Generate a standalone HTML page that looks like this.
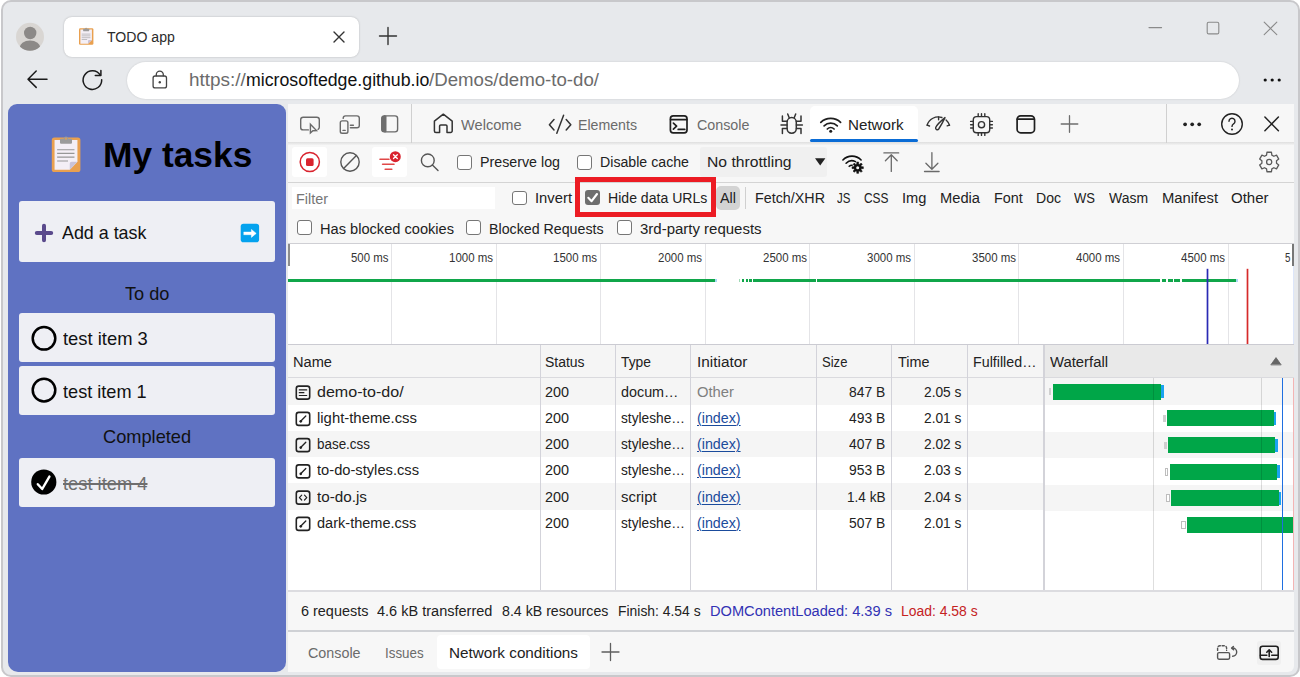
<!DOCTYPE html>
<html lang="en"><head><meta charset="utf-8"><title>TODO app - DevTools Network</title>
<style>
html,body{margin:0;padding:0;background:#fff;}
body{width:1300px;height:677px;position:relative;overflow:hidden;font-family:"Liberation Sans", Arial, sans-serif;}
.t{position:absolute;white-space:nowrap;line-height:1;transform-origin:0 50%;}
.b{position:absolute;box-sizing:border-box;}
svg{position:absolute;left:0;top:0;overflow:visible;}
</style></head><body>
<div class="b" style="left:1.00px;top:0.00px;width:1299.00px;height:677.00px;background:#e7e9ec;border:2px solid #c8c8cb;border-radius:10px;"></div>
<div class="b" style="left:64.00px;top:17.00px;width:295.00px;height:40.00px;background:#fff;border-radius:8px;box-shadow:0 0 2px rgba(0,0,0,.25);"></div>
<div class="b" style="left:127.00px;top:62.00px;width:1112.00px;height:37.00px;background:#fff;border-radius:18.5px;box-shadow:0 0 2px rgba(0,0,0,.15);"></div>
<div class="b" style="left:7.50px;top:104.00px;width:278.50px;height:568.00px;background:#5f72c2;border-radius:9px 9px 10px 10px;"></div>
<div class="b" style="left:19.00px;top:201.00px;width:256.00px;height:61.00px;background:#eeeff4;border-radius:3px;"></div>
<div class="b" style="left:19.00px;top:313.40px;width:256.00px;height:49.00px;background:#eeeff4;border-radius:3px;"></div>
<div class="b" style="left:19.00px;top:366.00px;width:256.00px;height:49.00px;background:#eeeff4;border-radius:3px;"></div>
<div class="b" style="left:19.00px;top:457.50px;width:256.00px;height:49.00px;background:#eeeff4;border-radius:3px;"></div>
<div class="b" style="left:288.00px;top:104.00px;width:1006.00px;height:568.00px;background:#f7f7f7;border-radius:0 0 6px 0;"></div>
<div class="b" style="left:288.00px;top:142.40px;width:1006.00px;height:2.60px;background:linear-gradient(#dedede,#f3f3f3);"></div>
<div class="b" style="left:411.00px;top:104.00px;width:1.00px;height:39.00px;background:#d0d0d0;"></div>
<div class="b" style="left:1166.00px;top:104.00px;width:1.00px;height:39.00px;background:#d0d0d0;"></div>
<div class="b" style="left:810.00px;top:106.20px;width:108.00px;height:34.80px;background:#fff;border-radius:5px 5px 0 0;"></div>
<div class="b" style="left:810.00px;top:139.00px;width:108.00px;height:3.00px;background:#0a6cd6;border-radius:1.5px;"></div>
<div class="b" style="left:292.40px;top:147.40px;width:34.60px;height:29.20px;background:#fff;border-radius:3px;"></div>
<div class="b" style="left:372.40px;top:147.40px;width:34.60px;height:29.20px;background:#fff;border-radius:3px;"></div>
<div class="b" style="left:700.00px;top:147.40px;width:126.60px;height:29.20px;background:#f0f0f0;border-radius:3px;"></div>
<div class="b" style="left:288.00px;top:181.80px;width:1006.00px;height:1.00px;background:#d4d4d4;"></div>
<div class="b" style="left:292.40px;top:186.60px;width:203.00px;height:22.40px;background:#fff;"></div>
<div class="b" style="left:716.20px;top:185.80px;width:23.80px;height:24.20px;background:#d3d3d3;border-radius:5px;"></div>
<div class="b" style="left:745.20px;top:187.00px;width:1.00px;height:22.00px;background:#d0d0d0;"></div>
<div class="b" style="left:457.40px;top:155.00px;width:14.60px;height:14.60px;background:#fff;border:1.3px solid #767676;border-radius:3px;"></div>
<div class="b" style="left:577.20px;top:155.00px;width:14.60px;height:14.60px;background:#fff;border:1.3px solid #767676;border-radius:3px;"></div>
<div class="b" style="left:512.20px;top:190.60px;width:14.60px;height:14.60px;background:#fff;border:1.3px solid #767676;border-radius:3px;"></div>
<div class="b" style="left:585.00px;top:190.40px;width:14.60px;height:14.60px;background:#6e6e6e;border-radius:3px;"></div>
<div class="b" style="left:297.20px;top:220.40px;width:14.60px;height:14.60px;background:#fff;border:1.3px solid #767676;border-radius:3px;"></div>
<div class="b" style="left:466.20px;top:220.40px;width:14.60px;height:14.60px;background:#fff;border:1.3px solid #767676;border-radius:3px;"></div>
<div class="b" style="left:617.40px;top:220.40px;width:14.60px;height:14.60px;background:#fff;border:1.3px solid #767676;border-radius:3px;"></div>
<div class="b" style="left:575.00px;top:177.00px;width:141.20px;height:39.80px;border:5px solid #ec1c24;"></div>
<div class="b" style="left:288.00px;top:243.00px;width:1006.00px;height:101.00px;background:#fff;border-top:1px solid #cfcfd4;"></div>
<div class="b" style="left:390.98px;top:244.00px;width:1.00px;height:100.00px;background:#e4e4e7;"></div>
<div class="b" style="left:495.56px;top:244.00px;width:1.00px;height:100.00px;background:#e4e4e7;"></div>
<div class="b" style="left:600.14px;top:244.00px;width:1.00px;height:100.00px;background:#e4e4e7;"></div>
<div class="b" style="left:704.72px;top:244.00px;width:1.00px;height:100.00px;background:#e4e4e7;"></div>
<div class="b" style="left:809.30px;top:244.00px;width:1.00px;height:100.00px;background:#e4e4e7;"></div>
<div class="b" style="left:913.88px;top:244.00px;width:1.00px;height:100.00px;background:#e4e4e7;"></div>
<div class="b" style="left:1018.46px;top:244.00px;width:1.00px;height:100.00px;background:#e4e4e7;"></div>
<div class="b" style="left:1123.04px;top:244.00px;width:1.00px;height:100.00px;background:#e4e4e7;"></div>
<div class="b" style="left:1227.62px;top:244.00px;width:1.00px;height:100.00px;background:#e4e4e7;"></div>
<div class="b" style="left:288.00px;top:244.00px;width:1.70px;height:22.00px;background:#8c8c8c;"></div>
<div class="b" style="left:1292.30px;top:244.00px;width:1.70px;height:22.00px;background:#777;"></div>
<div class="b" style="left:1293.00px;top:266.00px;width:1.00px;height:78.00px;background:#dde6fa;"></div>
<div class="b" style="left:288.00px;top:279.00px;width:427.00px;height:3.00px;background:#10a64a;"></div>
<div class="b" style="left:741.80px;top:279.00px;width:2.00px;height:3.00px;background:#10a64a;"></div>
<div class="b" style="left:745.60px;top:279.00px;width:2.20px;height:3.00px;background:#10a64a;"></div>
<div class="b" style="left:749.40px;top:279.00px;width:2.40px;height:3.00px;background:#10a64a;"></div>
<div class="b" style="left:753.40px;top:279.00px;width:62.20px;height:3.00px;background:#10a64a;"></div>
<div class="b" style="left:817.00px;top:279.00px;width:343.00px;height:3.00px;background:#10a64a;"></div>
<div class="b" style="left:1162.20px;top:279.00px;width:3.80px;height:3.00px;background:#10a64a;"></div>
<div class="b" style="left:1168.00px;top:279.00px;width:5.00px;height:3.00px;background:#10a64a;"></div>
<div class="b" style="left:1174.40px;top:279.00px;width:5.60px;height:3.00px;background:#10a64a;"></div>
<div class="b" style="left:1182.00px;top:279.00px;width:54.00px;height:3.00px;background:#10a64a;"></div>
<div class="b" style="left:715.00px;top:279.00px;width:2.00px;height:3.00px;background:#a9d8f5;"></div>
<div class="b" style="left:739.00px;top:279.00px;width:1.20px;height:3.00px;background:#9fd9b5;"></div>
<div class="b" style="left:1236.00px;top:279.00px;width:2.00px;height:3.00px;background:#a9d8f5;"></div>
<div class="b" style="left:288.00px;top:344.00px;width:1006.00px;height:35.00px;background:#f5f5f5;border-top:1px solid #cbcbd2;border-bottom:2px solid #dadade;"></div>
<div class="b" style="left:1044.00px;top:345.00px;width:250.00px;height:32.00px;background:#e9e9e9;"></div>
<div class="b" style="left:288.00px;top:378.35px;width:1006.00px;height:26.25px;background:#f5f5f5;"></div>
<div class="b" style="left:288.00px;top:404.60px;width:1006.00px;height:26.25px;background:#fff;"></div>
<div class="b" style="left:288.00px;top:430.85px;width:1006.00px;height:26.25px;background:#f5f5f5;"></div>
<div class="b" style="left:288.00px;top:457.10px;width:1006.00px;height:26.25px;background:#fff;"></div>
<div class="b" style="left:288.00px;top:483.35px;width:1006.00px;height:26.25px;background:#f5f5f5;"></div>
<div class="b" style="left:288.00px;top:509.60px;width:1006.00px;height:26.25px;background:#fff;"></div>
<div class="b" style="left:288.00px;top:535.85px;width:1006.00px;height:54.55px;background:#fff;"></div>
<div class="b" style="left:1045.00px;top:378.50px;width:249.00px;height:26.60px;background:#f5f5f5;"></div>
<div class="b" style="left:1045.00px;top:405.10px;width:249.00px;height:26.60px;background:#fff;"></div>
<div class="b" style="left:1045.00px;top:431.70px;width:249.00px;height:26.60px;background:#f5f5f5;"></div>
<div class="b" style="left:1045.00px;top:458.30px;width:249.00px;height:26.60px;background:#fff;"></div>
<div class="b" style="left:1045.00px;top:484.90px;width:249.00px;height:26.60px;background:#f5f5f5;"></div>
<div class="b" style="left:1045.00px;top:511.50px;width:249.00px;height:26.60px;background:#fff;"></div>
<div class="b" style="left:1045.00px;top:538.10px;width:249.00px;height:52.30px;background:#fff;"></div>
<div class="b" style="left:539.50px;top:345.00px;width:1.00px;height:245.40px;background:#d3d3da;"></div>
<div class="b" style="left:614.90px;top:345.00px;width:1.00px;height:245.40px;background:#d3d3da;"></div>
<div class="b" style="left:690.10px;top:345.00px;width:1.00px;height:245.40px;background:#d3d3da;"></div>
<div class="b" style="left:815.90px;top:345.00px;width:1.00px;height:245.40px;background:#d3d3da;"></div>
<div class="b" style="left:890.90px;top:345.00px;width:1.00px;height:245.40px;background:#d3d3da;"></div>
<div class="b" style="left:966.90px;top:345.00px;width:1.00px;height:245.40px;background:#d3d3da;"></div>
<div class="b" style="left:1043.20px;top:345.00px;width:1.80px;height:245.40px;background:#d3d3d9;"></div>
<div class="b" style="left:1160.00px;top:385.20px;width:3.60px;height:13.20px;background:#1aa3f0;"></div>
<div class="b" style="left:1053.00px;top:383.80px;width:108.00px;height:16.00px;background:#00a648;"></div>
<div class="b" style="left:1049.40px;top:388.30px;width:1.60px;height:7.00px;background:#cfcfcf;"></div>
<div class="b" style="left:1273.00px;top:411.85px;width:3.40px;height:13.20px;background:#1aa3f0;"></div>
<div class="b" style="left:1167.00px;top:410.45px;width:107.00px;height:16.00px;background:#00a648;"></div>
<div class="b" style="left:1163.00px;top:414.95px;width:3.00px;height:7.00px;background:#cfcfcf;"></div>
<div class="b" style="left:1274.00px;top:438.50px;width:3.60px;height:13.20px;background:#1aa3f0;"></div>
<div class="b" style="left:1168.40px;top:437.10px;width:106.60px;height:16.00px;background:#00a648;"></div>
<div class="b" style="left:1164.00px;top:441.60px;width:3.20px;height:7.00px;background:#cfcfcf;"></div>
<div class="b" style="left:1276.40px;top:465.15px;width:3.60px;height:13.20px;background:#1aa3f0;"></div>
<div class="b" style="left:1169.60px;top:463.75px;width:107.80px;height:16.00px;background:#00a648;"></div>
<div class="b" style="left:1164.60px;top:467.75px;width:3.40px;height:8.00px;background:#fff;border:1px solid #bdbdbd;"></div>
<div class="b" style="left:1278.00px;top:491.80px;width:3.40px;height:13.20px;background:#1aa3f0;"></div>
<div class="b" style="left:1171.00px;top:490.40px;width:108.00px;height:16.00px;background:#00a648;"></div>
<div class="b" style="left:1166.00px;top:494.40px;width:3.60px;height:8.00px;background:#fff;border:1px solid #bdbdbd;"></div>
<div class="b" style="left:1187.00px;top:517.05px;width:107.00px;height:16.00px;background:#00a648;"></div>
<div class="b" style="left:1181.00px;top:521.05px;width:5.00px;height:8.00px;background:#fff;border:1px solid #bdbdbd;"></div>
<div class="b" style="left:1152.50px;top:378.00px;width:1.00px;height:212.40px;background:rgba(0,0,0,.13);"></div>
<div class="b" style="left:1261.00px;top:378.00px;width:1.00px;height:212.40px;background:rgba(0,0,0,.13);"></div>
<div class="b" style="left:1281.80px;top:378.00px;width:1.40px;height:212.40px;background:#1f6fe0;"></div>
<div class="b" style="left:1292.60px;top:378.00px;width:1.00px;height:212.40px;background:#f3b4b4;"></div>
<div class="b" style="left:288.00px;top:589.50px;width:1006.00px;height:42.50px;background:#f7f7f7;border-top:2px solid #dcdce0;border-bottom:2px solid #cfd1d5;"></div>
<div class="b" style="left:437.00px;top:635.00px;width:153.40px;height:34.40px;background:#fff;border-radius:4px;"></div>
<div class="b" style="left:1257.00px;top:641.00px;width:24.00px;height:23.50px;background:#f0f0f0;border-radius:3px;"></div>
<div class="t" id="t0" style="left:107.30px;top:29.13px;font-size:15.2px;color:#2b2b2b;transform:scaleX(0.9280);">TODO app</div>
<div class="t" id="t1" style="left:189.00px;top:71.59px;font-size:17.5px;color:#6b6b6b;transform:scaleX(1.0813);">https://</div>
<div class="t" id="t2" style="left:246.00px;top:71.59px;font-size:17.5px;color:#111;transform:scaleX(1.0130);">microsoftedge.github.io</div>
<div class="t" id="t3" style="left:429.00px;top:71.59px;font-size:17.5px;color:#6b6b6b;transform:scaleX(1.0657);">/Demos/demo-to-do/</div>
<div class="t" id="t4" style="left:103.00px;top:137.95px;font-size:35.5px;color:#000;font-weight:700;transform:scaleX(0.9954);">My tasks</div>
<div class="t" id="t5" style="left:62.00px;top:224.46px;font-size:18.6px;color:#111;transform:scaleX(0.9606);">Add a task</div>
<div class="t" id="t6" style="left:125.00px;top:285.16px;font-size:18.6px;color:#111;transform:scaleX(0.9780);">To do</div>
<div class="t" id="t7" style="left:62.80px;top:330.46px;font-size:18.6px;color:#111;transform:scaleX(0.9886);">test item 3</div>
<div class="t" id="t8" style="left:62.80px;top:382.66px;font-size:18.6px;color:#111;transform:scaleX(0.9757);">test item 1</div>
<div class="t" id="t9" style="left:102.60px;top:427.96px;font-size:18.6px;color:#111;transform:scaleX(0.9797);">Completed</div>
<div class="t" id="t10" style="left:63.00px;top:474.76px;font-size:18.6px;color:#6e6e6e;text-decoration:line-through;text-decoration-thickness:1.5px;transform:scaleX(0.9851);">test item 4</div>
<div class="t" id="t11" style="left:461.00px;top:117.13px;font-size:15.2px;color:#6b6b6b;transform:scaleX(0.9614);">Welcome</div>
<div class="t" id="t12" style="left:578.00px;top:117.13px;font-size:15.2px;color:#6b6b6b;transform:scaleX(0.9319);">Elements</div>
<div class="t" id="t13" style="left:696.60px;top:117.13px;font-size:15.2px;color:#6b6b6b;transform:scaleX(0.9402);">Console</div>
<div class="t" id="t14" style="left:848.40px;top:117.13px;font-size:15.2px;color:#222;transform:scaleX(0.9981);">Network</div>
<div class="t" id="t15" style="left:480.00px;top:153.93px;font-size:15.2px;color:#222;transform:scaleX(0.9382);">Preserve log</div>
<div class="t" id="t16" style="left:600.00px;top:153.93px;font-size:15.2px;color:#222;transform:scaleX(0.9329);">Disable cache</div>
<div class="t" id="t17" style="left:707.40px;top:153.93px;font-size:15.2px;color:#222;transform:scaleX(1.0331);">No throttling</div>
<div class="t" id="t18" style="left:296.00px;top:191.33px;font-size:15.2px;color:#757575;transform:scaleX(0.9481);">Filter</div>
<div class="t" id="t19" style="left:534.60px;top:189.73px;font-size:15.2px;color:#222;transform:scaleX(0.9741);">Invert</div>
<div class="t" id="t20" style="left:608.00px;top:189.73px;font-size:15.2px;color:#222;transform:scaleX(0.9271);">Hide data URLs</div>
<div class="t" id="t21" style="left:720.00px;top:189.73px;font-size:15.2px;color:#222;transform:scaleX(0.9473);">All</div>
<div class="t" id="t22" style="left:755.00px;top:189.73px;font-size:15.2px;color:#222;transform:scaleX(0.9424);">Fetch/XHR</div>
<div class="t" id="t23" style="left:837.00px;top:189.73px;font-size:15.2px;color:#222;transform:scaleX(0.7556);">JS</div>
<div class="t" id="t24" style="left:863.60px;top:189.73px;font-size:15.2px;color:#222;transform:scaleX(0.7812);">CSS</div>
<div class="t" id="t25" style="left:901.60px;top:189.73px;font-size:15.2px;color:#222;transform:scaleX(0.9634);">Img</div>
<div class="t" id="t26" style="left:940.00px;top:189.73px;font-size:15.2px;color:#222;transform:scaleX(0.9668);">Media</div>
<div class="t" id="t27" style="left:993.60px;top:189.73px;font-size:15.2px;color:#222;transform:scaleX(0.9477);">Font</div>
<div class="t" id="t28" style="left:1036.00px;top:189.73px;font-size:15.2px;color:#222;transform:scaleX(0.9254);">Doc</div>
<div class="t" id="t29" style="left:1074.00px;top:189.73px;font-size:15.2px;color:#222;transform:scaleX(0.8582);">WS</div>
<div class="t" id="t30" style="left:1109.00px;top:189.73px;font-size:15.2px;color:#222;transform:scaleX(0.9183);">Wasm</div>
<div class="t" id="t31" style="left:1162.00px;top:189.73px;font-size:15.2px;color:#222;transform:scaleX(0.9755);">Manifest</div>
<div class="t" id="t32" style="left:1231.00px;top:189.73px;font-size:15.2px;color:#222;transform:scaleX(0.9899);">Other</div>
<div class="t" id="t33" style="left:320.00px;top:220.73px;font-size:15.2px;color:#222;transform:scaleX(0.9620);">Has blocked cookies</div>
<div class="t" id="t34" style="left:489.40px;top:220.73px;font-size:15.2px;color:#222;transform:scaleX(0.9361);">Blocked Requests</div>
<div class="t" id="t35" style="left:640.00px;top:220.73px;font-size:15.2px;color:#222;transform:scaleX(0.9866);">3rd-party requests</div>
<div class="t" id="t36" style="left:350.88px;top:251.64px;font-size:12px;color:#333;transform:scaleX(0.9502);">500 ms</div>
<div class="t" id="t37" style="left:448.86px;top:251.64px;font-size:12px;color:#333;transform:scaleX(0.9559);">1000 ms</div>
<div class="t" id="t38" style="left:553.44px;top:251.64px;font-size:12px;color:#333;transform:scaleX(0.9559);">1500 ms</div>
<div class="t" id="t39" style="left:658.02px;top:251.64px;font-size:12px;color:#333;transform:scaleX(0.9559);">2000 ms</div>
<div class="t" id="t40" style="left:762.60px;top:251.64px;font-size:12px;color:#333;transform:scaleX(0.9559);">2500 ms</div>
<div class="t" id="t41" style="left:867.18px;top:251.64px;font-size:12px;color:#333;transform:scaleX(0.9559);">3000 ms</div>
<div class="t" id="t42" style="left:971.76px;top:251.64px;font-size:12px;color:#333;transform:scaleX(0.9559);">3500 ms</div>
<div class="t" id="t43" style="left:1076.34px;top:251.64px;font-size:12px;color:#333;transform:scaleX(0.9559);">4000 ms</div>
<div class="t" id="t44" style="left:1180.92px;top:251.64px;font-size:12px;color:#333;transform:scaleX(0.9559);">4500 ms</div>
<div class="t" id="t45" style="left:1285.00px;top:251.64px;font-size:12px;color:#333;transform:scaleX(0.8075);">5</div>
<div class="t" id="t46" style="left:293.40px;top:353.53px;font-size:15.2px;color:#222;transform:scaleX(0.9626);">Name</div>
<div class="t" id="t47" style="left:545.40px;top:353.53px;font-size:15.2px;color:#222;transform:scaleX(0.9196);">Status</div>
<div class="t" id="t48" style="left:621.40px;top:353.53px;font-size:15.2px;color:#222;transform:scaleX(0.9108);">Type</div>
<div class="t" id="t49" style="left:697.00px;top:353.53px;font-size:15.2px;color:#222;transform:scaleX(1.0118);">Initiator</div>
<div class="t" id="t50" style="left:822.00px;top:353.53px;font-size:15.2px;color:#222;transform:scaleX(0.8597);">Size</div>
<div class="t" id="t51" style="left:897.60px;top:353.53px;font-size:15.2px;color:#222;transform:scaleX(0.9461);">Time</div>
<div class="t" id="t52" style="left:973.00px;top:353.53px;font-size:15.2px;color:#222;transform:scaleX(0.9388);">Fulfilled…</div>
<div class="t" id="t53" style="left:1049.60px;top:353.53px;font-size:15.2px;color:#222;transform:scaleX(0.9771);">Waterfall</div>
<div class="t" id="t54" style="left:317.00px;top:383.73px;font-size:15.2px;color:#222;transform:scaleX(1.0575);">demo-to-do/</div>
<div class="t" id="t55" style="left:545.40px;top:383.73px;font-size:15.2px;color:#222;transform:scaleX(0.9470);">200</div>
<div class="t" id="t56" style="left:621.40px;top:383.73px;font-size:15.2px;color:#222;transform:scaleX(0.9444);">docum…</div>
<div class="t" id="t57" style="left:697.00px;top:383.73px;font-size:15.2px;color:#808080;transform:scaleX(0.9741);">Other</div>
<div class="t" id="t58" style="left:849.40px;top:383.73px;font-size:15.2px;color:#222;transform:scaleX(0.9118);">847 B</div>
<div class="t" id="t59" style="left:924.00px;top:383.73px;font-size:15.2px;color:#222;transform:scaleX(0.9039);">2.05 s</div>
<div class="t" id="t60" style="left:317.00px;top:409.98px;font-size:15.2px;color:#222;transform:scaleX(0.9790);">light-theme.css</div>
<div class="t" id="t61" style="left:545.40px;top:409.98px;font-size:15.2px;color:#222;transform:scaleX(0.9470);">200</div>
<div class="t" id="t62" style="left:621.40px;top:409.98px;font-size:15.2px;color:#222;transform:scaleX(0.9026);">styleshe…</div>
<div class="t" id="t63" style="left:697.00px;top:409.98px;font-size:15.2px;color:#1a4b9c;text-decoration:underline;text-decoration-thickness:1px;text-underline-offset:2px;transform:scaleX(0.9389);">(index)</div>
<div class="t" id="t64" style="left:849.40px;top:409.98px;font-size:15.2px;color:#222;transform:scaleX(0.9118);">493 B</div>
<div class="t" id="t65" style="left:924.00px;top:409.98px;font-size:15.2px;color:#222;transform:scaleX(0.9039);">2.01 s</div>
<div class="t" id="t66" style="left:317.00px;top:436.23px;font-size:15.2px;color:#222;transform:scaleX(0.8843);">base.css</div>
<div class="t" id="t67" style="left:545.40px;top:436.23px;font-size:15.2px;color:#222;transform:scaleX(0.9470);">200</div>
<div class="t" id="t68" style="left:621.40px;top:436.23px;font-size:15.2px;color:#222;transform:scaleX(0.9026);">styleshe…</div>
<div class="t" id="t69" style="left:697.00px;top:436.23px;font-size:15.2px;color:#1a4b9c;text-decoration:underline;text-decoration-thickness:1px;text-underline-offset:2px;transform:scaleX(0.9389);">(index)</div>
<div class="t" id="t70" style="left:849.40px;top:436.23px;font-size:15.2px;color:#222;transform:scaleX(0.9118);">407 B</div>
<div class="t" id="t71" style="left:924.00px;top:436.23px;font-size:15.2px;color:#222;transform:scaleX(0.9039);">2.02 s</div>
<div class="t" id="t72" style="left:317.00px;top:462.48px;font-size:15.2px;color:#222;transform:scaleX(0.9668);">to-do-styles.css</div>
<div class="t" id="t73" style="left:545.40px;top:462.48px;font-size:15.2px;color:#222;transform:scaleX(0.9470);">200</div>
<div class="t" id="t74" style="left:621.40px;top:462.48px;font-size:15.2px;color:#222;transform:scaleX(0.9026);">styleshe…</div>
<div class="t" id="t75" style="left:697.00px;top:462.48px;font-size:15.2px;color:#1a4b9c;text-decoration:underline;text-decoration-thickness:1px;text-underline-offset:2px;transform:scaleX(0.9389);">(index)</div>
<div class="t" id="t76" style="left:849.40px;top:462.48px;font-size:15.2px;color:#222;transform:scaleX(0.9118);">953 B</div>
<div class="t" id="t77" style="left:924.00px;top:462.48px;font-size:15.2px;color:#222;transform:scaleX(0.9039);">2.03 s</div>
<div class="t" id="t78" style="left:317.00px;top:488.73px;font-size:15.2px;color:#222;transform:scaleX(1.0038);">to-do.js</div>
<div class="t" id="t79" style="left:545.40px;top:488.73px;font-size:15.2px;color:#222;transform:scaleX(0.9470);">200</div>
<div class="t" id="t80" style="left:621.40px;top:488.73px;font-size:15.2px;color:#222;transform:scaleX(0.9808);">script</div>
<div class="t" id="t81" style="left:697.00px;top:488.73px;font-size:15.2px;color:#1a4b9c;text-decoration:underline;text-decoration-thickness:1px;text-underline-offset:2px;transform:scaleX(0.9389);">(index)</div>
<div class="t" id="t82" style="left:847.10px;top:488.73px;font-size:15.2px;color:#222;transform:scaleX(0.8940);">1.4 kB</div>
<div class="t" id="t83" style="left:924.00px;top:488.73px;font-size:15.2px;color:#222;transform:scaleX(0.9039);">2.04 s</div>
<div class="t" id="t84" style="left:317.00px;top:514.98px;font-size:15.2px;color:#222;transform:scaleX(0.9574);">dark-theme.css</div>
<div class="t" id="t85" style="left:545.40px;top:514.98px;font-size:15.2px;color:#222;transform:scaleX(0.9470);">200</div>
<div class="t" id="t86" style="left:621.40px;top:514.98px;font-size:15.2px;color:#222;transform:scaleX(0.9026);">styleshe…</div>
<div class="t" id="t87" style="left:697.00px;top:514.98px;font-size:15.2px;color:#1a4b9c;text-decoration:underline;text-decoration-thickness:1px;text-underline-offset:2px;transform:scaleX(0.9389);">(index)</div>
<div class="t" id="t88" style="left:849.40px;top:514.98px;font-size:15.2px;color:#222;transform:scaleX(0.9118);">507 B</div>
<div class="t" id="t89" style="left:924.00px;top:514.98px;font-size:15.2px;color:#222;transform:scaleX(0.9039);">2.01 s</div>
<div class="t" id="t90" style="left:300.60px;top:603.13px;font-size:15.2px;color:#222;transform:scaleX(0.9503);">6 requests</div>
<div class="t" id="t91" style="left:377.00px;top:603.13px;font-size:15.2px;color:#222;transform:scaleX(0.9559);">4.6 kB transferred</div>
<div class="t" id="t92" style="left:502.00px;top:603.13px;font-size:15.2px;color:#222;transform:scaleX(0.9336);">8.4 kB resources</div>
<div class="t" id="t93" style="left:618.00px;top:603.13px;font-size:15.2px;color:#222;transform:scaleX(0.9144);">Finish: 4.54 s</div>
<div class="t" id="t94" style="left:710.00px;top:603.13px;font-size:15.2px;color:#3232b4;transform:scaleX(0.9623);">DOMContentLoaded: 4.39 s</div>
<div class="t" id="t95" style="left:901.40px;top:603.13px;font-size:15.2px;color:#c5221f;transform:scaleX(0.9162);">Load: 4.58 s</div>
<div class="t" id="t96" style="left:308.00px;top:644.73px;font-size:15.2px;color:#6b6b6b;transform:scaleX(0.9438);">Console</div>
<div class="t" id="t97" style="left:385.40px;top:644.73px;font-size:15.2px;color:#6b6b6b;transform:scaleX(0.8791);">Issues</div>
<div class="t" id="t98" style="left:449.00px;top:644.73px;font-size:15.2px;color:#222;transform:scaleX(1.0054);">Network conditions</div>
<svg width="1300" height="677" viewBox="0 0 1300 677" fill="none" stroke-linecap="round" stroke-linejoin="round">
<clipPath id="av"><circle cx="30" cy="36.8" r="14"/></clipPath>
<circle cx="30" cy="36.8" r="14" fill="#d9d6d3"/>
<g clip-path="url(#av)" fill="#8c8987"><circle cx="30.2" cy="33" r="6.2"/><ellipse cx="30" cy="48.5" rx="10.6" ry="8"/></g>
<g transform="translate(79.00 27.50) scale(0.4966 0.4784)"><rect x="0" y="1.500" width="29" height="34.800" rx="2.600" fill="#e9a04f"/><path d="M2.800 4.100h23.200v21.800l-7.800 8h-15.400z" fill="#f4eff6"/><path d="M26 25.900l-7.800 8v-6a2 2 0 0 1 2-2z" fill="#c9c2d8"/><rect x="8.300" y="2.700" width="12.200" height="5" rx="0.800" fill="#9b9b9b"/><circle cx="14.400" cy="2.500" r="2.100" fill="#9b9b9b"/><circle cx="14.400" cy="2.700" r="0.950" fill="#e9a04f"/><g stroke="#979797" stroke-width="1.150" stroke-linecap="butt"><path d="M5.400 13.800h17.600M5.400 17.500h17.600M5.400 21.300h17.600M5.400 25.100h11"/></g></g>
<g transform="translate(51.80 136.00) scale(0.9862 0.9946)"><rect x="0" y="1.500" width="29" height="34.800" rx="2.600" fill="#e9a04f"/><path d="M2.800 4.100h23.200v21.800l-7.800 8h-15.400z" fill="#f4eff6"/><path d="M26 25.900l-7.800 8v-6a2 2 0 0 1 2-2z" fill="#c9c2d8"/><rect x="8.300" y="2.700" width="12.200" height="5" rx="0.800" fill="#9b9b9b"/><circle cx="14.400" cy="2.500" r="2.100" fill="#9b9b9b"/><circle cx="14.400" cy="2.700" r="0.950" fill="#e9a04f"/><g stroke="#979797" stroke-width="1.150" stroke-linecap="butt"><path d="M5.400 13.800h17.600M5.400 17.500h17.600M5.400 21.300h17.600M5.400 25.100h11"/></g></g>
<path d="M1207.500 268.800V344" stroke="#2a2ab4" stroke-width="1.700" stroke-linecap="butt"/><path d="M1247.500 268.800V344" stroke="#d62a2a" stroke-width="1.700" stroke-linecap="butt"/>
<path d="M334 32l10 10M344 32l-10 10" stroke="#333" stroke-width="1.4"/>
<path d="M379.5 36h17M388 27.5v17" stroke="#333" stroke-width="1.4"/>
<g stroke="#8a8a8a" stroke-width="1.1"><path d="M1149 27.6h12.6"/><rect x="1207.2" y="22.3" width="11.6" height="11.6" rx="1.5"/><path d="M1264.2 22.2l12.6 12.4M1276.8 22.2l-12.6 12.4"/></g>
<g stroke="#1b1b1b" stroke-width="1.500"><path d="M47 79.200h-18.600M36.200 71l-8.200 8.200 8.200 8.200"/><path d="M101.69 79.78A9.3 9.3 0 1 1 100.20 75.03"/><path d="M100.900 70.400v5h-5.600"/></g>
<g stroke="#444" stroke-width="1.300"><rect x="153.100" y="76" width="13.400" height="11.900" rx="2"/><path d="M156.300 75.800v-1.200a3.500 3.500 0 0 1 7 0v1.200"/></g><circle cx="159.800" cy="82.200" r="1.200" fill="#444"/>
<g fill="#111"><circle cx="1265.2" cy="80" r="1.6"/><circle cx="1272.2" cy="80" r="1.6"/><circle cx="1279.2" cy="80" r="1.6"/></g>
<path d="M36.8 233h14.4M44 225.8v14.4" stroke="#5a4a8c" stroke-width="4"/>
<rect x="240.700" y="223.800" width="18.400" height="18.400" rx="2.800" fill="#04a2ee"/>
<path d="M244 232.100h7.400v-2.700l4.800 4-4.800 4v-2.700h-7.400z" fill="#fff" stroke="#fff" stroke-width="0.500"/>
<circle cx="44" cy="338.3" r="11.3" stroke="#000" stroke-width="2.5"/>
<circle cx="44" cy="390.1" r="11.3" stroke="#000" stroke-width="2.5"/>
<circle cx="43.8" cy="482" r="12.6" fill="#000"/>
<path d="M37.8 484.2l4.400 4.800 7.200-12.400" stroke="#fff" stroke-width="2.400"/>
<g stroke="#6a6a6a" stroke-width="1.4">
<path d="M308.4 129.9h-5.2a2.5 2.5 0 0 1-2.5-2.5v-7.6a2.5 2.5 0 0 1 2.5-2.5h13.6a2.5 2.5 0 0 1 2.5 2.5v7.4a2.5 2.5 0 0 1-1.2 2.1"/><path d="M310.4 124.2v8.8l2.500-2.300 3.600-.100z" stroke-linejoin="miter"/>
<rect x="340.3" y="120.9" width="7.6" height="12.4" rx="1.8"/><path d="M343.2 118.4v-.2a2.300 2.300 0 0 1 2.300-2.300h11.500a2.300 2.300 0 0 1 2.300 2.300v7.300a2.300 2.300 0 0 1-2.300 2.300h-6.600"/><path d="M350.400 125.300h3M343 130.400h2.200"/>
<rect x="381.800" y="115.900" width="15.800" height="16" rx="2.600"/>
</g>
<path d="M384.300 116h1.700v15.800h-1.700a2.500 2.500 0 0 1-2.500-2.500v-10.800a2.500 2.500 0 0 1 2.500-2.500z" fill="#6e6e6e" stroke="#6e6e6e" stroke-width="1"/>
<g stroke="#333" stroke-width="1.500">
<path d="M434.400 121.200l8.900-7 8.900 7v9.800a1.500 1.500 0 0 1-1.500 1.500h-3.700v-6.400a1.200 1.200 0 0 0-1.200-1.200h-5a1.200 1.200 0 0 0-1.200 1.200v6.400h-3.700a1.500 1.500 0 0 1-1.500-1.500z"/>
<path d="M554 119.600l-4.600 5.200 4.600 5.200M566.200 119.600l4.600 5.200-4.600 5.200M563.600 115.200l-6.800 18"/>
</g>
<g stroke="#1f1f1f" stroke-width="1.700"><rect x="670.400" y="115.900" width="16.600" height="17" rx="2.800"/><path d="M670.600 119.600h16.200M673.400 123.200l3.200 3-3.200 3M678.200 129.400h6.600"/></g>
<g stroke="#333" stroke-width="1.500"><rect x="787.100" y="117.600" width="9.200" height="15.600" rx="4.600"/><path d="M789.200 117.800l-1.500-3.800M794.200 117.800l1.500-3.800M787 121.200h-4.600v-5.200M787 124.900h-6M787 128.600h-4.600v5M796.400 121.200h4.600v-5.200M796.400 124.900h6M796.400 128.600h4.600v5"/></g>
<g stroke="#1f1f1f" stroke-width="1.700"><path d="M820.800 122.400a14.300 14.300 0 0 1 19.800 0M824.100 125.800a9.500 9.500 0 0 1 13.200 0M827.300 129a4.900 4.900 0 0 1 6.800 0"/></g><circle cx="830.700" cy="131.200" r="1.500" fill="#1f1f1f"/>
<g stroke="#333" stroke-width="1.400"><path d="M927.100 125.200a11.700 11.700 0 0 1 14.800-7.700M946.100 119.900a11.700 11.700 0 0 1 3.400 5.300"/><path d="M927.100 125.200l2.400.800M938.600 117v2.800M949.500 125.200l-2.300.700"/><path d="M945 117.600c-1.800 3.800-4.200 8.200-6.300 11.400a1.700 1.700 0 0 1-3-1.500c1.400-3.400 6-7.200 9.300-9.900z"/></g>
<g stroke="#333" stroke-width="1.400"><rect x="973.300" y="116.600" width="16.400" height="16.200" rx="3.200"/><circle cx="981.500" cy="124.700" r="3.100"/><path d="M978.200 113.800v2.600M981.500 113.800v2.600M984.800 113.800v2.600M978.200 133v2.400M981.500 133v2.400M984.800 133v2.400M970.600 121.400h2.500M970.600 124.700h2.500M970.600 128h2.500M989.900 121.400h2.500M989.900 124.700h2.500M989.900 128h2.500"/></g>
<g stroke="#1f1f1f" stroke-width="1.700"><rect x="1017.100" y="115.800" width="17.400" height="17" rx="3.600"/><path d="M1017.300 119.200h17"/></g>
<path d="M1061.200 124h16.600M1069.500 115.700v16.600" stroke="#6e6e6e" stroke-width="1.300"/>
<g fill="#222"><circle cx="1185.100" cy="124.300" r="1.850"/><circle cx="1192.200" cy="124.300" r="1.850"/><circle cx="1199.200" cy="124.300" r="1.850"/></g>
<g stroke="#222" stroke-width="1.400"><circle cx="1232" cy="124" r="10.300"/><path d="M1229 121.200a3 3 0 1 1 4.600 2.600c-1 .7-1.600 1.300-1.600 2.600"/></g><circle cx="1232" cy="129.400" r="1" fill="#222"/>
<path d="M1264.900 117l13.500 13.800M1278.400 117l-13.500 13.800" stroke="#222" stroke-width="1.500"/>
<circle cx="309.800" cy="162" r="9.600" stroke="#d9232e" stroke-width="1.500"/><rect x="306" y="158.300" width="7.600" height="7.600" rx="1.500" fill="#d9232e"/>
<g stroke="#555" stroke-width="1.400"><circle cx="350" cy="162" r="9.200"/><path d="M343.600 168.600l12.800-13.200"/></g>
<g stroke="#e04848" stroke-width="1.600"><path d="M380 159.200h9M382.600 164.200h11.400M385.200 169.200h6.600"/></g>
<circle cx="395.300" cy="156.700" r="5.500" fill="#d9232e"/><path d="M393.500 154.700l3.800 3.800M397.300 154.700l-3.800 3.800" stroke="#fff" stroke-width="1.300"/>
<g stroke="#555" stroke-width="1.400"><circle cx="427.800" cy="160.400" r="6.400"/><path d="M432.400 165l5.600 5.600"/></g>
<path d="M815 158.200h10.400l-5.200 7.400z" fill="#222"/>
<g stroke="#111" stroke-width="1.600"><path d="M842.900 160a12.700 12.700 0 0 1 18.200 0M846.100 163.200a8.200 8.200 0 0 1 9.400-1.600M849.200 166.300a3.900 3.900 0 0 1 2.900-1.100"/></g>
<path d="M861.51 166.86L863.32 166.76L863.32 168.64L861.51 168.54L860.98 169.80L862.34 171.01L861.01 172.34L859.80 170.98L858.54 171.51L858.64 173.32L856.76 173.32L856.86 171.51L855.60 170.98L854.39 172.34L853.06 171.01L854.42 169.80L853.89 168.54L852.08 168.64L852.08 166.76L853.89 166.86L854.42 165.60L853.06 164.39L854.39 163.06L855.60 164.42L856.86 163.89L856.76 162.08L858.64 162.08L858.54 163.89L859.80 164.42L861.01 163.06L862.34 164.39L860.98 165.60z" fill="#111" stroke="#111" stroke-width="0.600" stroke-linejoin="round"/>
<circle cx="857.700" cy="167.700" r="1.500" fill="#f7f7f7"/>
<g stroke="#6a6a6a" stroke-width="1.300"><path d="M883.900 152.900h14.800M891.300 171.400v-16.200M885.400 160.800l5.900-6 5.900 6"/><path d="M924.500 171.500h14.600M931.900 152.600v16.200M925.900 163.200l6 6.100 6-6.100"/></g>
<path d="M1271.85 168.91L1271.45 171.74L1266.95 171.74L1266.55 168.91L1264.54 167.75L1261.89 168.82L1259.64 164.92L1261.89 163.16L1261.89 160.84L1259.64 159.08L1261.89 155.18L1264.54 156.25L1266.55 155.09L1266.95 152.26L1271.45 152.26L1271.85 155.09L1273.86 156.25L1276.51 155.18L1278.76 159.08L1276.51 160.84L1276.51 163.16L1278.76 164.92L1276.51 168.82L1273.86 167.75z" stroke="#5a5a5a" stroke-width="1.300" stroke-linejoin="round"/><circle cx="1269.2" cy="162.0" r="2.6" stroke="#5a5a5a" stroke-width="1.300"/>
<path d="M588.300 197.800l3.300 3.400 5.400-7.200" stroke="#fff" stroke-width="2.100"/>
<path d="M1271 364.600l5-7 5 7z" fill="#666" stroke="#666" stroke-width="0.800"/>
<rect x="296.300" y="386.10" width="13.400" height="13" rx="2.400" stroke="#222" stroke-width="1.600"/>
<path d="M299.300 389.90h7.400M299.300 392.70h4.600M299.300 395.50h7.400" stroke="#222" stroke-width="1.200"/>
<rect x="296.300" y="412.35" width="13.400" height="13" rx="2.400" stroke="#222" stroke-width="1.600"/>
<path d="M300.400 421.55l5.400-5.600" stroke="#222" stroke-width="1.300"/><circle cx="300.800" cy="421.35" r="1.300" fill="#222"/>
<rect x="296.300" y="438.60" width="13.400" height="13" rx="2.400" stroke="#222" stroke-width="1.600"/>
<path d="M300.400 447.80l5.400-5.600" stroke="#222" stroke-width="1.300"/><circle cx="300.800" cy="447.60" r="1.300" fill="#222"/>
<rect x="296.300" y="464.85" width="13.400" height="13" rx="2.400" stroke="#222" stroke-width="1.600"/>
<path d="M300.400 474.05l5.400-5.600" stroke="#222" stroke-width="1.300"/><circle cx="300.800" cy="473.85" r="1.300" fill="#222"/>
<rect x="296.300" y="491.10" width="13.400" height="13" rx="2.400" stroke="#222" stroke-width="1.600"/>
<path d="M301.700 495.20l-2.300 2.400 2.300 2.400M304.500 495.20l2.300 2.400-2.300 2.400" stroke="#222" stroke-width="1.200"/>
<rect x="296.300" y="517.35" width="13.400" height="13" rx="2.400" stroke="#222" stroke-width="1.600"/>
<path d="M300.400 526.55l5.400-5.600" stroke="#222" stroke-width="1.300"/><circle cx="300.800" cy="526.35" r="1.300" fill="#222"/>
<path d="M602 652h17M610.500 643.500v17" stroke="#5f5f5f" stroke-width="1.300"/>
<g stroke="#555" stroke-width="1.400"><rect x="1217.600" y="652.600" width="12" height="6.600" rx="1.400"/><path d="M1217.600 650.400v-2.400a2.200 2.200 0 0 1 2.200-2.200h4.600a2.200 2.200 0 0 1 2.200 2.200v2.400" stroke-dasharray="2.200 1.700"/><path d="M1232.600 656.200a4.100 4.100 0 0 0 0-8.200M1233.400 646.400l-1.800 1.700 2 1.700"/></g>
<g stroke="#1f1f1f" stroke-width="1.600"><rect x="1260.200" y="646.200" width="18" height="13.200" rx="2.400"/><path d="M1260.400 655.200h6.400M1271.800 655.200h6.400M1269.200 656.400v-6M1266.800 652.200l2.400-2.400 2.400 2.400"/></g>
</svg>
</body></html>
